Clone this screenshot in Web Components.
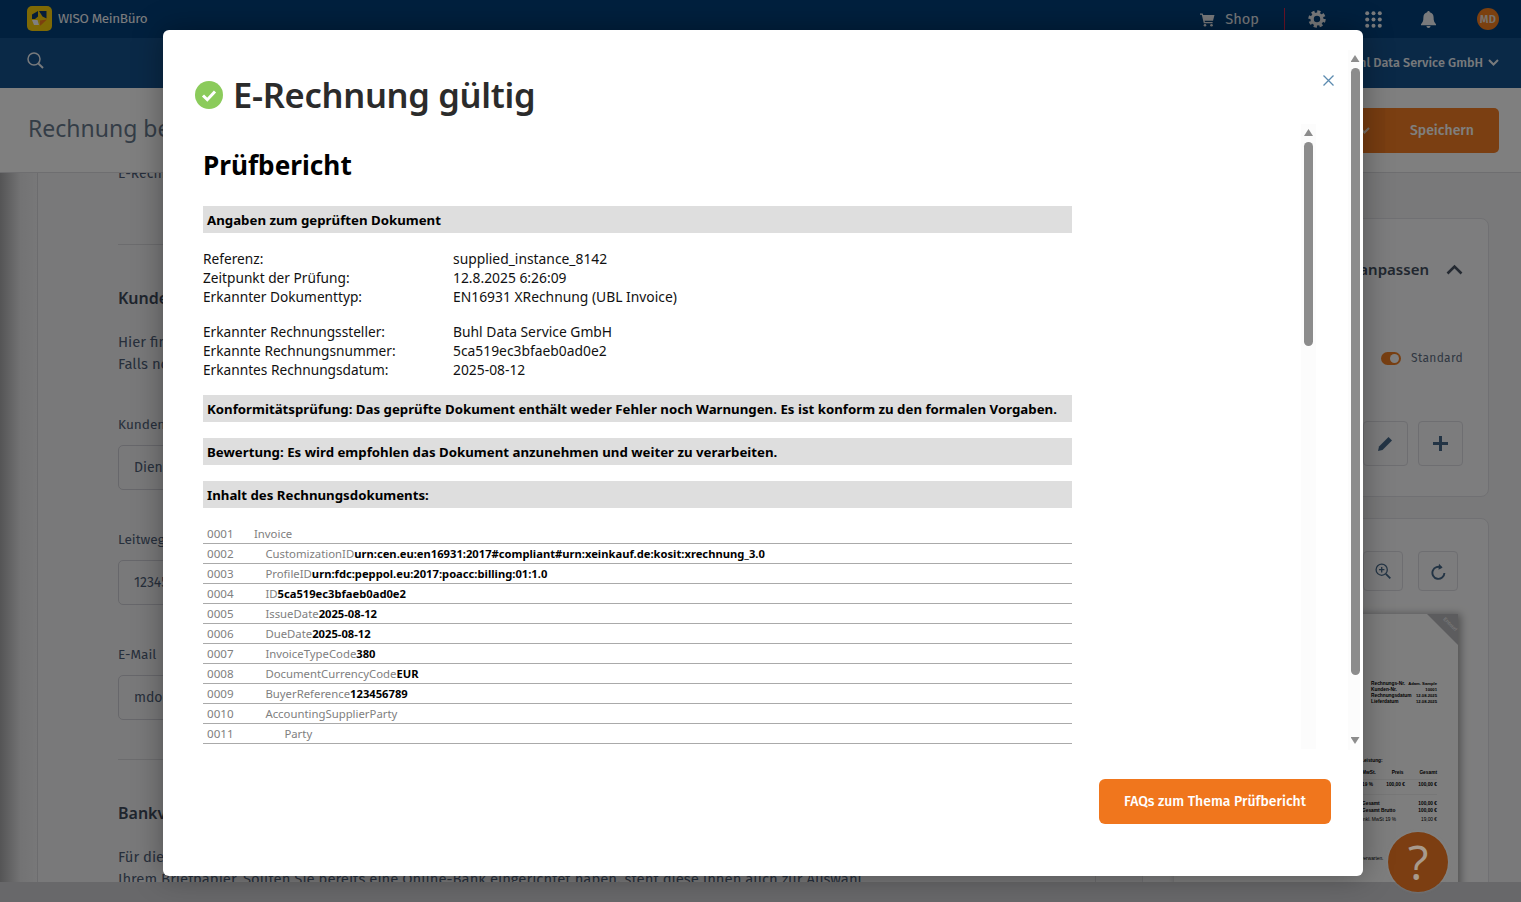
<!DOCTYPE html>
<html lang="de">
<head>
<meta charset="utf-8">
<title>Prüfbericht</title>
<style>
  html, body { margin: 0; height: 100%; overflow: hidden; }
  body { font-family: "Noto Sans", "Liberation Sans", sans-serif; }
</style>
</head>
<body>
<app-shell>
  <top-bar></top-bar>
  <nav-bar></nav-bar>
  <page-head></page-head>
  <page-main></page-main>
  <report-dialog slot="overlay"></report-dialog>
</app-shell>

<script>
const make = (html) => {
  const template = document.createElement('template');
  template.innerHTML = html;
  return class extends HTMLElement {
    constructor() {
      super();
      this.attachShadow({ mode: 'open' }).appendChild(template.content.cloneNode(true));
    }
  };
};

customElements.define('app-shell', make(`
<style>
  :host { display: flex; flex-direction: column; height: 902px; position: relative; overflow: hidden; background: #d8d8da; }
  .page { flex: none; height: 882px; display: flex; flex-direction: column; overflow: hidden; }
  .strip { flex: 1; background: #d0d0d4; }
  .veil { position: absolute; inset: 0; background: rgba(0,0,0,.5); }
  .help { position: absolute; left: 1388px; top: 832px; width: 60px; height: 60px; border-radius: 50%; background: #7c3e12;
    color: #a89a8c; font: 500 48px/60px "Open Sans", sans-serif; text-align: center; box-shadow: 0 0 3px rgba(150,150,150,.5); }
  .dialog { position: absolute; left: 163px; top: 30px; }
</style>
<div class="page"><slot></slot></div>
<div class="strip"></div>
<div class="veil"></div>
<div class="help">?</div>
<div class="dialog"><slot name="overlay"></slot></div>
`));

customElements.define('top-bar', make(`
<style>
  :host { display: flex; flex: none; align-items: center; height: 38px; background: #02417d; color: #fff; padding: 0 22px 0 27px;
    font-family: "Fira Sans", "Noto Sans", sans-serif; }
  .logo { width: 25px; height: 25px; margin-top: -2px; display: block; }
  .name { margin-left: 6px; font-size: 13.5px; letter-spacing: -.35px; color: #fff; opacity: .98; margin-top: -1px; }
  .right { margin-left: auto; display: flex; align-items: center; }
  .shop { font-size: 14.6px; margin-left: 10px; color: #f3f5f8; }
  .sep { width: 1px; height: 23px; background: #d4274f; margin: 0 23px 0 25px; }
  svg.ic { display: block; }
  .avatar { width: 22px; height: 22px; border-radius: 50%; background: #f8801f; color: #f3e6dc; font-size: 11px; font-weight: 600;
    display: flex; align-items: center; justify-content: center; margin-left: 41px; letter-spacing: .3px; }
</style>
<svg class="logo" viewBox="0 0 25 25">
  <rect width="25" height="25" rx="5" fill="#fdd20a"/>
  <path d="M12 5H19.500V12.500L15.500 10.500Z" fill="#0a3b73"/>
  <path d="M5 8.500L11 5V10.500L8 13H5Z" fill="#0a3b73"/>
  <path d="M5 14H10.500L12 19H7Z" fill="#fff"/>
  <path d="M20 13.500L13.500 19.500H13V14.500Z" fill="#f8801f"/>
</svg>
<span class="name">WISO MeinBüro</span>
<div class="right">
  <svg class="ic" width="15" height="15" viewBox="0 0 15 15" fill="#f3f5f8">
    <path d="M0 1.500H2.600L3.200 3H14.500L13 8.800H4.600L4.900 10H12.600V11.200H3.800L1.800 2.700H0Z"/>
    <circle cx="5" cy="13.200" r="1.300"/><circle cx="11.500" cy="13.200" r="1.300"/>
  </svg>
  <span class="shop">Shop</span>
  <span class="sep"></span>
  <svg class="ic" width="18" height="18" viewBox="0 0 18 18" fill="none" stroke="#f3f5f8">
    <circle cx="9" cy="9" r="4.900" stroke-width="3.400"/>
    <circle cx="9" cy="9" r="7.300" stroke-width="2.800" stroke-dasharray="3.200 2.530"/>
  </svg>
  <svg class="ic" style="margin-left:39px" width="17" height="17" viewBox="0 0 17 17" fill="#f3f5f8">
    <circle cx="2.200" cy="2.200" r="2"/><circle cx="8.500" cy="2.200" r="2"/><circle cx="14.800" cy="2.200" r="2"/>
    <circle cx="2.200" cy="8.500" r="2"/><circle cx="8.500" cy="8.500" r="2"/><circle cx="14.800" cy="8.500" r="2"/>
    <circle cx="2.200" cy="14.800" r="2"/><circle cx="8.500" cy="14.800" r="2"/><circle cx="14.800" cy="14.800" r="2"/>
  </svg>
  <svg class="ic" style="margin-left:39px" width="15" height="17" viewBox="0 0 15 17" fill="#f3f5f8">
    <path d="M7.500 0C8.300 0 8.800 .6 8.800 1.300C11.200 1.800 12.600 3.800 12.600 6.300C12.600 10 13.300 11.400 15 13.200V14.300H0V13.200C1.700 11.400 2.400 10 2.400 6.300C2.400 3.800 3.800 1.800 6.200 1.300C6.200 .6 6.700 0 7.500 0Z"/>
    <path d="M5.500 15H9.500C9.500 16.200 8.600 17 7.500 17C6.400 17 5.500 16.200 5.500 15Z"/>
  </svg>
  <span class="avatar">MD</span>
</div>
`));

customElements.define('nav-bar', make(`
<style>
  :host { display: flex; flex: none; align-items: center; height: 50px; background: #14528f; padding: 0 22px 0 27px; color: #fff;
    font-family: "Fira Sans", "Noto Sans", sans-serif; }
  .right { margin-left: auto; display: flex; align-items: center; font-size: 12.7px; font-weight: 500; margin-top: -2px; color: #f0f4f8; }
  svg { display: block; }
  .glass { margin-top: -6px; }
  .chev { margin-left: 5px; }
</style>
<svg class="glass" width="17" height="17" viewBox="0 0 17 17" fill="none" stroke="#f0f4f8" stroke-width="1.500">
  <circle cx="7" cy="7" r="6"/><path d="M11.200 11.400L16 16" stroke-width="2"/>
</svg>
<div class="right">
  <span>Buhl Data Service GmbH</span>
  <svg class="chev" width="11" height="7" viewBox="0 0 11 7" fill="none" stroke="#f0f4f8" stroke-width="2"><path d="M1 1L5.500 5.500L10 1"/></svg>
</div>
`));

customElements.define('page-head', make(`
<style>
  :host { display: flex; flex: none; align-items: center; height: 84px; border-bottom: 1px solid #dcdce0; background: #fff; padding: 0 22px 0 28px;
    font-family: "Fira Sans", "Noto Sans", sans-serif; }
  h1 { margin: 0; font-size: 23px; font-weight: 400; color: #697a8e; font-family: "Noto Sans", sans-serif; margin-top: -4px; }
  .actions { margin-left: auto; display: flex; height: 45px; color: #fff; border-radius: 5px; overflow: hidden; }
  .drop { width: 60px; background: #f07a22; display: flex; align-items: center; justify-content: flex-end; padding-right: 15px; box-sizing: border-box; }
  .save { width: 114px; background: #f67e24; display: flex; align-items: center; justify-content: center; font-size: 14px; font-weight: 500; }
</style>
<h1>Rechnung bearbeiten</h1>
<div class="actions">
  <div class="drop"><svg width="11" height="7" viewBox="0 0 11 7" fill="none" stroke="#f0e0d0" stroke-width="2"><path d="M1 1L5.500 5.500L10 1"/></svg></div>
  <div class="save">Speichern</div>
</div>
`));

customElements.define('page-main', make(`
<style>
  :host { display: flex; flex: 1; min-height: 0; overflow: hidden; background: #f2f2f4; font-family: "Fira Sans", "Noto Sans", sans-serif; color: #4f5f78; }
  .rail { flex: none; width: 37px; border-right: 1px solid #d8d8dc; background: linear-gradient(90deg, #a9a9ab, #e6e6e8 55%, #f0f0f2); }
  .form { flex: none; width: 977px; padding: 0 0 0 80px; box-sizing: content-box; border-right: 1px solid #d8d8dc; }
  .side { flex: 1; padding: 45px 32px 0 46px; min-width: 0; }
</style>
<div class="rail"></div>
<div class="form"><invoice-form></invoice-form></div>
<div class="side"><side-panel></side-panel></div>
`));

customElements.define('invoice-form', make(`
<style>
  :host { display: block; font-size: 14px; line-height: 22px; white-space: nowrap; }
  .top { margin-top: -10px; font-size: 14px; }
  hr { border: 0; border-top: 1px solid #d9d9dd; margin: 0; }
  h3 { margin: 0; font-size: 16px; font-weight: 600; color: #3f4b5c; line-height: 22px; font-family: "Noto Sans", sans-serif; }
  p { margin: 0; font-size: 14.85px; }
  label { display: block; font-size: 13.6px; line-height: 20px; margin-top: 40px; }
  .inp { height: 43px; border: 1px solid #cfcfd6; border-radius: 5px; line-height: 43px; padding-left: 15px; margin-top: 10px; width: 60%; }
</style>
<div class="top">E-Rechnung</div>
<hr style="margin-top:59px">
<h3 style="margin-top:42px">Kundendaten</h3>
<p style="margin-top:22px">Hier finden Sie die Angaben zum ausgewählten Kunden.<br>Falls notwendig, können Sie diese hier ergänzen.</p>
<label>Kundennummer</label>
<div class="inp">Dienstleistung</div>
<label>Leitweg-ID</label>
<div class="inp">123456789</div>
<label>E-Mail</label>
<div class="inp">mdoe@example.com</div>
<hr style="margin-top:39px">
<h3 style="margin-top:42px">Bankverbindung</h3>
<p style="margin-top:22px">Für die Überweisung werden Ihre Bankdaten in die Rechnung übernommen und erscheinen auf<br>Ihrem Briefpapier. Sollten Sie bereits eine Online-Bank eingerichtet haben, steht diese Ihnen auch zur Auswahl.</p>
`));

customElements.define('tool-button', make(`
<style>
  :host { display: flex; align-items: center; justify-content: center; width: var(--size, 45px); height: var(--size, 45px); border: 1px solid #dcdce2; border-radius: 4px; box-sizing: border-box; color: #47698a; background: #f8f8fa; }
</style>
<slot></slot>
`));

customElements.define('side-panel', make(`
<style>
  :host { display: flex; flex-direction: column; gap: 21px; width: 347px; color: #5d6d85; font-family: "Fira Sans", "Noto Sans", sans-serif; }
  .card { border: 1px solid #e1e1e6; border-radius: 8px; background: #fbfbfc; box-sizing: border-box; }
  .one { height: 279px; padding: 38px 25px 0 0; }
  .title { display: flex; justify-content: flex-end; align-items: center; gap: 17px; font: 600 15px/24px "Noto Sans", sans-serif; color: #434f60; }
  .std { display: flex; justify-content: flex-end; align-items: center; gap: 10px; font-size: 12px; margin-top: 70px; color: #606f85; letter-spacing: .3px; }
  .toggle { width: 20px; height: 13px; border-radius: 7px; background: #f07f24; display: flex; justify-content: flex-end; align-items: center; padding: 0 2px; box-sizing: border-box; }
  .toggle i { display: block; width: 9px; height: 9px; border-radius: 50%; background: #fff; }
  .tools { display: flex; justify-content: flex-end; gap: 10px; margin-top: 56px; }
  .two { height: 420px; padding: 32px 30px 0 31px; }
  .two .tools { margin-top: 0; gap: 15px; --size: 40px; }
  invoice-paper { margin-top: 23px; }
</style>
<div class="card one">
  <div class="title"><span>Briefpapier anpassen</span>
    <svg width="17" height="11" viewBox="0 0 17 11" fill="none" stroke="#4a5565" stroke-width="2.600"><path d="M1.500 9.500L8.500 2.500L15.500 9.500"/></svg>
  </div>
  <div class="std"><span class="toggle"><i></i></span><span>Standard</span></div>
  <div class="tools">
    <tool-button><svg width="15" height="15" viewBox="0 0 15 15" fill="#47698a"><path d="M0 15L1 10.500L10.500 1L14 4.500L4.500 14Z"/></svg></tool-button>
    <tool-button><svg width="15" height="15" viewBox="0 0 15 15" fill="#47698a"><path d="M6 0H9V6H15V9H9V15H6V9H0V6H6Z"/></svg></tool-button>
  </div>
</div>
<div class="card two">
  <div class="tools">
    <tool-button><svg width="16" height="16" viewBox="0 0 16 16" fill="none" stroke="#47698a" stroke-width="1.300"><circle cx="6.700" cy="6.700" r="5.600"/><path d="M4 6.700H9.400M6.700 4V9.400"/><path d="M10.800 10.800L15.300 15.300" stroke-width="1.800"/></svg></tool-button>
    <tool-button><svg width="15" height="17" viewBox="0 0 15 17" fill="none" stroke="#47698a" stroke-width="1.900"><path d="M10.500 4.700A6 6 0 1 0 13.400 10"/><path d="M8 .8L11.600 4.500L7.500 6.800" fill="#47698a" stroke-width="0"/></svg></tool-button>
  </div>
  <invoice-paper></invoice-paper>
</div>
`));

customElements.define('invoice-paper', make(`
<style>
  :host { display: block; position: relative; height: 340px; background: #fdfdfd; box-shadow: 3px 0 8px rgba(0,0,0,.35); padding: 67px 21px 0 0; box-sizing: border-box;
    font: 700 4.8px/6px "Liberation Sans", sans-serif; color: #000; }
  .corner { position: absolute; right: 0; top: 0; width: 0; height: 0; border-top: 31px solid #b8b8bc; border-left: 31px solid transparent; }
  .mark { position: absolute; right: -1px; top: 7px; transform: rotate(45deg); color: #fff; font-size: 5px; font-weight: 400; }
  .info { margin-left: auto; width: 66px; display: flex; justify-content: space-between; white-space: nowrap; }
  .info span:last-child { font-size: 4.2px; }
  .rows { margin-left: auto; width: 75px; display: flex; justify-content: space-between; white-space: nowrap; }
  .line { border-top: 1px solid #eee; margin-left: auto; width: 85px; }
</style>
<div class="corner"></div><span class="mark">Entwurf</span>
<div class="info"><span>Rechnungs-Nr.</span><span>Adam. Sample</span></div>
<div class="info"><span>Kunden-Nr.</span><span>10001</span></div>
<div class="info"><span>Rechnungsdatum</span><span>12.08.2025</span></div>
<div class="info"><span>Lieferdatum</span><span>12.08.2025</span></div>
<div style="margin:53px 0 0 187px">Leistung:</div>
<div class="rows" style="margin-top:6px"><span>MwSt.</span><span>Preis</span><span>Gesamt</span></div>
<div class="line" style="margin-top:3px"></div>
<div class="rows" style="margin-top:2px"><span>19 %</span><span>100,00 €</span><span>100,00 €</span></div>
<div class="line" style="margin-top:6px"></div>
<div class="rows" style="margin-top:6px"><span>Gesamt</span><span>100,00 €</span></div>
<div class="rows" style="margin-top:1px"><span>Gesamt Brutto</span><span>100,00 €</span></div>
<div class="rows" style="margin-top:3px;font-weight:400"><span>inkl. MwSt 19 %</span><span>19,00 €</span></div>
<div style="margin:33px 0 0 187px;font-weight:400">verwarten.</div>
`));

customElements.define('scroll-rail', make(`
<style>
  :host { display: flex; flex-direction: column; align-items: center; box-sizing: border-box; flex: none; background: #fcfcfc; }
  .up { flex: none; width: 9px; height: 7px; background: #8c8c8c; clip-path: polygon(50% 0, 100% 100%, 0 100%); }
  .thumb { flex: none; width: 9px; background: #8c8c8c; border-radius: 5px; height: var(--thumb, 100px); margin-top: var(--to-thumb, 6px); }
  .rest { flex: 1; }
</style>
<div class="up"></div>
<div class="thumb"></div>
<div class="rest"></div>
<slot></slot>
`));

customElements.define('section-bar', make(`
<style>
  :host { display: block; height: 27px; line-height: 29px; background: #dedede; padding-left: 4px; font-weight: 700; font-size: 13.25px; color: #000; margin-top: var(--top, 16px); white-space: nowrap; }
</style>
<slot></slot>
`));

customElements.define('meta-row', class extends HTMLElement {
  constructor() {
    super();
    this.attachShadow({ mode: 'open' }).innerHTML = `
      <style>
        :host { display: flex; height: 19px; line-height: 19px; font-size: 13.7px; color: #111; }
        .k { flex: none; width: 250px; }
        .v { font-size: 13.85px; }
      </style>
      <span class="k">${this.getAttribute('k')}</span><span class="v">${this.getAttribute('v')}</span>`;
  }
});

customElements.define('xml-row', class extends HTMLElement {
  constructor() {
    super();
    const level = Number(this.getAttribute('level'));
    this.attachShadow({ mode: 'open' }).innerHTML = `
      <style>
        :host { display: flex; height: 20px; box-sizing: border-box; border-bottom: 1px solid #aaa; line-height: 20px; font-size: 11.6px; color: #808080; white-space: nowrap; padding-left: 4px; }
        .n { flex: none; width: ${47 + level * 9.5}px; }
        .x { font-size: 11.35px; }
        b { color: #000; font-weight: 700; font-size: 11.2px; }
      </style>
      <span class="n">${this.getAttribute('n')}</span><span class="x">${this.getAttribute('k')}</span><b>${this.getAttribute('v') || ''}</b>`;
  }
});

customElements.define('report-view', make(`
<style>
  :host { display: block; flex: 1; min-width: 0; height: 100%; overflow: hidden; padding-left: 8px; font-family: "Noto Sans", sans-serif; color: #000; }
  .inner { width: 869px; }
  h1 { margin: 22px 0 0; font-size: 26.2px; font-weight: 700; line-height: 38px; }
  .meta { margin-top: 16px; }
</style>
<div class="inner">
  <h1>Prüfbericht</h1>
  <section-bar style="--top:22px">Angaben zum geprüften Dokument</section-bar>
  <div style="margin-top:16px">
    <meta-row k="Referenz:" v="supplied_instance_8142"></meta-row>
    <meta-row k="Zeitpunkt der Prüfung:" v="12.8.2025 6:26:09"></meta-row>
    <meta-row k="Erkannter Dokumenttyp:" v="EN16931 XRechnung (UBL Invoice)"></meta-row>
  </div>
  <div class="meta">
    <meta-row k="Erkannter Rechnungssteller:" v="Buhl Data Service GmbH"></meta-row>
    <meta-row k="Erkannte Rechnungsnummer:" v="5ca519ec3bfaeb0ad0e2"></meta-row>
    <meta-row k="Erkanntes Rechnungsdatum:" v="2025-08-12"></meta-row>
  </div>
  <section-bar>Konformitätsprüfung: Das geprüfte Dokument enthält weder Fehler noch Warnungen. Es ist konform zu den formalen Vorgaben.</section-bar>
  <section-bar>Bewertung: Es wird empfohlen das Dokument anzunehmen und weiter zu verarbeiten.</section-bar>
  <section-bar>Inhalt des Rechnungsdokuments:</section-bar>
  <div style="margin-top:16px">
    <xml-row level="0" n="0001" k="Invoice"></xml-row>
    <xml-row level="1.2" n="0002" k="CustomizationID" v="urn:cen.eu:en16931:2017#compliant#urn:xeinkauf.de:kosit:xrechnung_3.0"></xml-row>
    <xml-row level="1.2" n="0003" k="ProfileID" v="urn:fdc:peppol.eu:2017:poacc:billing:01:1.0"></xml-row>
    <xml-row level="1.2" n="0004" k="ID" v="5ca519ec3bfaeb0ad0e2"></xml-row>
    <xml-row level="1.2" n="0005" k="IssueDate" v="2025-08-12"></xml-row>
    <xml-row level="1.2" n="0006" k="DueDate" v="2025-08-12"></xml-row>
    <xml-row level="1.2" n="0007" k="InvoiceTypeCode" v="380"></xml-row>
    <xml-row level="1.2" n="0008" k="DocumentCurrencyCode" v="EUR"></xml-row>
    <xml-row level="1.2" n="0009" k="BuyerReference" v="123456789"></xml-row>
    <xml-row level="1.2" n="0010" k="AccountingSupplierParty"></xml-row>
    <xml-row level="3.2" n="0011" k="Party"></xml-row>
  </div>
</div>
`));

customElements.define('report-dialog', make(`
<style>
  :host { display: flex; width: 1200px; height: 846px; background: #fff; border-radius: 6px; box-shadow: 0 0 30px rgba(0,0,0,.35); align-items: flex-start; overflow: hidden; }
  .col { flex: 1; min-width: 0; height: 100%; display: flex; flex-direction: column; padding-left: 32px; box-sizing: border-box; }
  header { flex: none; height: 94px; display: flex; align-items: center; padding: 36px 0 0; box-sizing: border-box; }
  .ok { flex: none; display: block; }
  h2 { margin: 0 0 0 10px; font: 600 34.5px/50px "Noto Sans", sans-serif; color: #2b2b2b; letter-spacing: -.3px; }
  .close { margin-left: auto; margin-right: 14px; align-self: flex-start; margin-top: 9px; display: block; }
  .body { flex: none; height: 625px; display: flex; margin-right: 32px; }
  footer { flex: 1; display: flex; justify-content: flex-end; align-items: flex-start; padding: 30px 17px 0 0; }
  .faq { height: 45px; width: 232px; text-align: center; background: #f0761d; color: #fff; border-radius: 6px; font: 500 14px/45px "Fira Sans", "Noto Sans", sans-serif; }
  scroll-rail.inner { width: 15px; height: 625px; padding-top: 5px; --thumb: 204px; --to-thumb: 6px; }
  scroll-rail.outer { width: 12px; height: 700px; margin-top: 20px; margin-right: 3px; padding: 5px 0 6px 2px; --thumb: 607px; --to-thumb: 6px; }
  .arrow-down { display: block; width: 9px; height: 7px; background: #8c8c8c; clip-path: polygon(0 0, 100% 0, 50% 100%); }
</style>
<div class="col">
  <header>
    <svg class="ok" width="28" height="28" viewBox="0 0 28 28"><circle cx="14" cy="14" r="14" fill="#8bcb5b"/><path d="M8 14.500L12.300 18.700L20 10.500" fill="none" stroke="#fff" stroke-width="3"/></svg>
    <h2>E-Rechnung gültig</h2>
    <svg class="close" width="11" height="11" viewBox="0 0 11 11" fill="none" stroke="#5c8bb0" stroke-width="1.300"><path d="M.5 .5L10.500 10.500M10.500 .5L.5 10.500"/></svg>
  </header>
  <div class="body">
    <report-view></report-view>
    <scroll-rail class="inner"></scroll-rail>
  </div>
  <footer><div class="faq">FAQs zum Thema Prüfbericht</div></footer>
</div>
<scroll-rail class="outer"><span class="arrow-down"></span></scroll-rail>
`));
</script>
</body>
</html>
